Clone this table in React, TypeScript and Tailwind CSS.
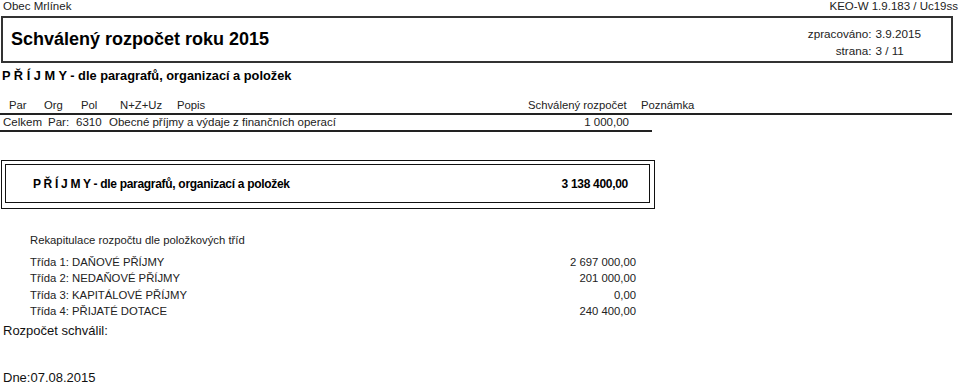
import React from "react";

const rows = [
  { label: "Třída 1: DAŇOVÉ PŘÍJMY", value: "2 697 000,00" },
  { label: "Třída 2: NEDAŇOVÉ PŘÍJMY", value: "201 000,00" },
  { label: "Třída 3: KAPITÁLOVÉ PŘÍJMY", value: "0,00" },
  { label: "Třída 4: PŘIJATÉ DOTACE", value: "240 400,00" },
];

export default function App() {
  return (
    <div className="h-[383px] w-[960px] overflow-hidden bg-white text-[#111] [font-family:'Liberation_Sans',Arial,sans-serif]">
      {/* top line */}
      <div className="flex h-[16px] items-start justify-between text-[11.5px] leading-[12px] text-[#222]">
        <span className="pl-[3px]">Obec Mrlínek</span>
        <span className="pr-[2px]">KEO-W 1.9.183 / Uc19ss</span>
      </div>

      {/* title box */}
      <div className="ml-[1px] flex h-[47px] w-[952px] items-center justify-between border-2 border-[#333] pl-[8px] pr-[30px]">
        <h1 className="mb-[2px] text-[18px] font-bold leading-none text-black">Schválený rozpočet roku 2015</h1>
        <div className="mt-[5px] grid grid-cols-[auto_auto] gap-x-[4px] gap-y-[5px] text-[11.7px] leading-[12px] text-[#222]">
          <span className="text-right">zpracováno:</span>
          <span>3.9.2015</span>
          <span className="text-right">strana:</span>
          <span>3 / 11</span>
        </div>
      </div>

      <div className="mt-[5px] pl-[2px] text-[12.8px] font-bold leading-[16px] text-black">
        P Ř Í J M Y - dle paragrafů, organizací a položek
      </div>

      {/* header row */}
      <div className="mt-[14px] flex h-[17px] w-[952px] items-end border-b-2 border-[#222] pb-[2px] text-[11.3px] leading-[12px] text-[#222]">
        <span className="w-[44px] pl-[9px]">Par</span>
        <span className="w-[37px]">Org</span>
        <span className="w-[39px]">Pol</span>
        <span className="w-[57px]">N+Z+Uz</span>
        <span className="w-[351px]">Popis</span>
        <span className="w-[113px]">Schválený rozpočet</span>
        <span>Poznámka</span>
      </div>

      {/* celkem row */}
      <div className="flex h-[17px] w-[652px] items-end border-b-2 border-[#222] pb-[2px] text-[11.5px] leading-[12px] text-[#222]">
        <span className="w-[48px] pl-[3px]">Celkem</span>
        <span className="w-[28px]">Par:</span>
        <span className="w-[33px]">6310</span>
        <span className="flex-1">Obecné příjmy a výdaje z finančních operací</span>
        <span className="pr-[23px]">1 000,00</span>
      </div>

      {/* double box */}
      <div className="ml-[1px] mt-[28px] w-[654px] border border-[#111] pb-[5px] pl-[3px] pr-[4px] pt-[3px]">
        <div className="flex h-[39px] items-center justify-between border border-[#111] pl-[27px] pr-[21px] text-[12px] font-bold tracking-[-0.3px] text-black">
          <span>P Ř Í J M Y - dle paragrafů, organizací a položek</span>
          <span>3 138 400,00</span>
        </div>
      </div>

      {/* rekapitulace */}
      <div className="ml-[30px] mt-[23px] w-[606px] text-[11.3px] leading-[16.5px] text-[#222]">
        <div className="mb-[5px]">Rekapitulace rozpočtu dle položkových tříd</div>
        {rows.map((r) => (
          <div key={r.label} className="flex justify-between">
            <span>{r.label}</span>
            <span>{r.value}</span>
          </div>
        ))}
      </div>

      <div className="mt-[3px] pl-[3px] text-[13px] leading-[16px]">Rozpočet schválil:</div>
      <div className="mt-[32px] pl-[3px] text-[13px] leading-[13px]">Dne:07.08.2015</div>
    </div>
  );
}
